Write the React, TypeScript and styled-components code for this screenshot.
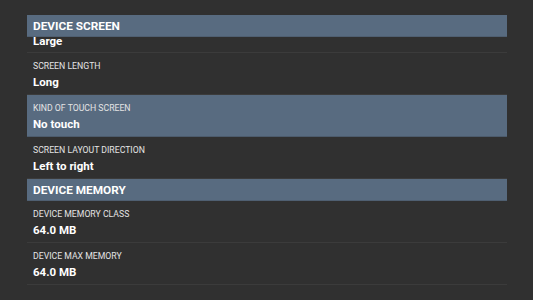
import React from "react";
import styled, { createGlobalStyle } from "styled-components";

const Global = createGlobalStyle`
  html, body {
    margin: 0;
    padding: 0;
    background: #303030;
    font-family: Roboto, "Noto Sans", "Liberation Sans", sans-serif;
  }
  #root { min-height: 300px; }
`;

const Page = styled.div`
  width: 533px;
  height: 300px;
  overflow: hidden;
  background: #303030;
  padding: 15px 26px 0 27px;
  box-sizing: border-box;
`;

const List = styled.div`
  display: flex;
  flex-direction: column;
`;

const SectionHeader = styled.div`
  height: 22px;
  display: flex;
  align-items: center;
  padding-left: 6px;
  background: #586b80;
  box-shadow: inset 0 -1px 0 #4f5f71;
  color: #ffffff;
  font-weight: 700;
  font-size: 11.8px;
  position: relative;
  z-index: 1;
`;

const Row = styled.div<{ $active?: boolean }>`
  height: 42px;
  box-sizing: border-box;
  padding: 7px 6px 0;
  display: flex;
  flex-direction: column;
  gap: 2px;
  background: ${(p) => (p.$active ? "#586b80" : "transparent")};
  border-bottom: 1px solid ${(p) => (p.$active ? "#4c5b6c" : "#3b3b3b")};
`;

const CutRow = styled.div`
  height: 16px;
  box-sizing: border-box;
  overflow: hidden;
  display: flex;
  flex-direction: column;
  justify-content: flex-end;
  padding: 0 6px 3px;
  border-bottom: 1px solid #3b3b3b;
`;

const Label = styled.div`
  font-size: 8.7px;
  line-height: 12px;
  color: #e4e4e4;
  text-transform: uppercase;
  white-space: nowrap;
`;

const Value = styled.div`
  font-size: 11.5px;
  line-height: 16px;
  font-weight: 700;
  color: #ffffff;
  white-space: nowrap;
  flex-shrink: 0;
`;

type Item = { label: string; value: string; active?: boolean };

const screenItems: Item[] = [
  { label: "Screen length", value: "Long" },
  { label: "Kind of touch screen", value: "No touch", active: true },
  { label: "Screen layout direction", value: "Left to right" },
];

const memoryItems: Item[] = [
  { label: "Device memory class", value: "64.0 MB" },
  { label: "Device max memory", value: "64.0 MB" },
];

const InfoRow = ({ item }: { item: Item }) => (
  <Row $active={item.active}>
    <Label>{item.label}</Label>
    <Value>{item.value}</Value>
  </Row>
);

export default function App() {
  return (
    <>
      <Global />
      <Page>
        <List>
          <SectionHeader>DEVICE SCREEN</SectionHeader>
          <CutRow>
            <Value>Large</Value>
          </CutRow>
          {screenItems.map((it) => (
            <InfoRow key={it.label} item={it} />
          ))}
          <SectionHeader>DEVICE MEMORY</SectionHeader>
          {memoryItems.map((it) => (
            <InfoRow key={it.label} item={it} />
          ))}
        </List>
      </Page>
    </>
  );
}
